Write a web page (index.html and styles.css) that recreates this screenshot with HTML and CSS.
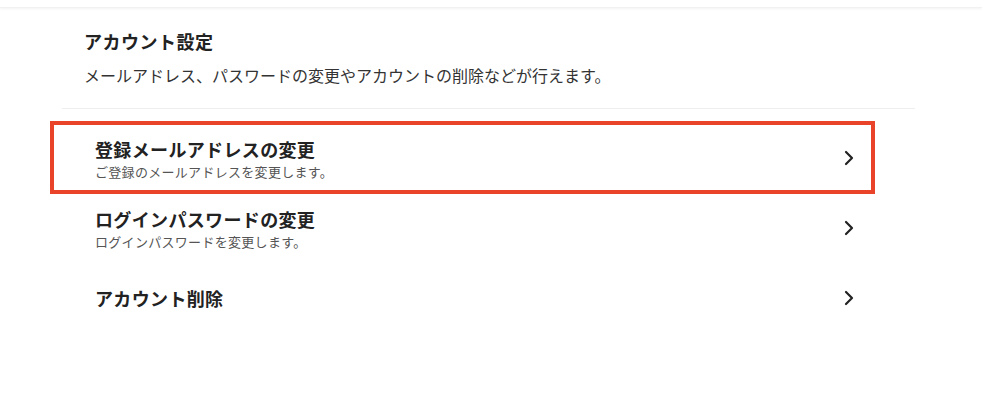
FILE: index.html
```html
<!DOCTYPE html>
<html lang="ja">
  <head>
    <meta charset="utf-8">
    <meta name="viewport" content="width=device-width, initial-scale=1">
    <title>アカウント設定</title>
    <link rel="stylesheet" href="styles.css">
  </head>
  <body>
    <div class="topbar"></div>

    <div class="container">
      <div class="section-head">
        <h1>アカウント設定</h1>
        <p>メールアドレス、パスワードの変更やアカウントの削除などが行えます。</p>
      </div>

      <ul class="menu">
        <li class="menu-item">
          <a href="#">
            <div class="menu-text">
              <span class="menu-title">登録メールアドレスの変更</span>
              <span class="menu-sub">ご登録のメールアドレスを変更します。</span>
            </div>
            <svg class="chevron" width="10" height="16" viewBox="0 0 10 16"><path d="M2 2 L8 8 L2 14" fill="none" stroke="#222" stroke-width="2.2" stroke-linecap="round" stroke-linejoin="round"/></svg>
          </a>
          <span class="highlight"></span>
        </li>
        <li class="menu-item">
          <a href="#">
            <div class="menu-text">
              <span class="menu-title">ログインパスワードの変更</span>
              <span class="menu-sub">ログインパスワードを変更します。</span>
            </div>
            <svg class="chevron" width="10" height="16" viewBox="0 0 10 16"><path d="M2 2 L8 8 L2 14" fill="none" stroke="#222" stroke-width="2.2" stroke-linecap="round" stroke-linejoin="round"/></svg>
          </a>
        </li>
        <li class="menu-item">
          <a href="#">
            <div class="menu-text">
              <span class="menu-title">アカウント削除</span>
            </div>
            <svg class="chevron" width="10" height="16" viewBox="0 0 10 16"><path d="M2 2 L8 8 L2 14" fill="none" stroke="#222" stroke-width="2.2" stroke-linecap="round" stroke-linejoin="round"/></svg>
          </a>
        </li>
      </ul>
    </div>
  </body>
</html>
```

FILE: styles.css
```css
body {
  margin: 0;
  padding: 0;
  background: #fff;
  color: #222;
  font-family: "Noto Sans CJK JP", "Noto Sans", sans-serif;
}

.topbar {
  height: 7px;
  border-bottom: 1px solid #f1f1f1;
  box-shadow: 0 1px 3px rgba(0, 0, 0, 0.05);
}

.container {
  width: 853px;
  margin-left: 62px;
}

.section-head {
  padding: 20px 0 21px 22px;
  border-bottom: 1px solid #eeeeee;
}

.section-head h1 {
  margin: 0;
  font-size: 18px;
  line-height: 26px;
  font-weight: 700;
  letter-spacing: 0.5px;
  color: #222;
}

.section-head p {
  margin: 9px 0 0;
  font-size: 16px;
  line-height: 24px;
  color: #333;
}

.menu {
  list-style: none;
  margin: 0;
  padding: 14px 0 0;
}

.menu-item {
  position: relative;
}

.menu-item a {
  display: flex;
  align-items: center;
  justify-content: space-between;
  height: 70px;
  padding: 0 60px 0 33px;
  color: inherit;
  text-decoration: none;
}

.menu-text {
  display: flex;
  flex-direction: column;
}

.menu-title {
  font-size: 18px;
  line-height: 24px;
  font-weight: 700;
  letter-spacing: 0.35px;
  color: #222;
}

.menu-sub {
  margin-top: 2px;
  font-size: 13px;
  line-height: 17px;
  letter-spacing: 0.3px;
  color: #555;
}

.chevron {
  display: block;
  margin-right: 1px;
}

/* repère rouge autour du premier item */
.highlight {
  position: absolute;
  left: -12px;
  top: -2px;
  width: 817px;
  height: 65px;
  border: 4px solid #e9432a;
  pointer-events: none;
}
```
